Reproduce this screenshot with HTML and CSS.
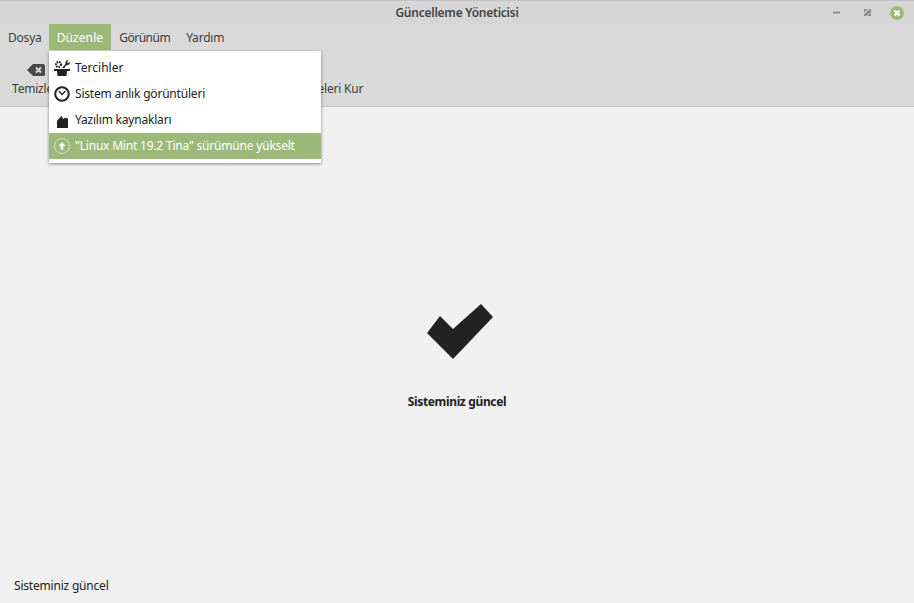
FILE: index.html
```html
<!DOCTYPE html>
<html lang="tr">
<head>
<meta charset="utf-8">
<title>Güncelleme Yöneticisi</title>
<link rel="stylesheet" href="styles.css">
</head>
<body>
<div class="window">
  <header class="titlebar">
    <div class="title">Güncelleme Yöneticisi</div>
    <div class="controls">
      <svg class="ctl" width="20" height="20" viewBox="0 0 20 20"><rect x="6" y="9.500" width="7" height="2" rx="0.500" fill="#8c8c8c"/></svg>
      <svg class="ctl" width="20" height="20" viewBox="0 0 20 20"><path d="M7 10.500 11 7H7zM14 10V7h-1.500L7 12.500V14H9zM14 10.500 10.500 14H14z" fill="#8c8c8c"/></svg>
      <svg class="ctl" width="20" height="20" viewBox="0 0 20 20"><circle cx="10" cy="11" r="7" fill="#9db97a"/><path d="M7.500 8.500l5 5M12.500 8.500l-5 5" stroke="#fff" stroke-width="2.200"/></svg>
    </div>
  </header>
  <nav class="menubar">
    <span class="mi first">Dosya</span>
    <span class="mi active">Düzenle</span>
    <span class="mi tight">Görünüm</span>
    <span class="mi">Yardım</span>
  </nav>
  <div class="toolbar">
    <div class="tool">
      <svg width="18" height="12" viewBox="0 0 18 12"><path d="M6 0h10.500a1.500 1.500 0 0 1 1.500 1.500v9a1.500 1.500 0 0 1-1.500 1.500H6L0 6z" fill="#4a4a4a"/><path d="M9 3.500l5 5M14 3.500l-5 5" stroke="#d9d9d9" stroke-width="2"/></svg>
      <span>Temizle</span>
    </div>
    <div class="tool install">
      <span>Güncellemeleri Kur</span>
    </div>
  </div>
  <main class="content">
    <div class="status-center">
      <svg class="check" width="68" height="56" viewBox="0 0 68 56"><path d="M14 12 27 25 55 0 67 13 27 55 1 29z" fill="#222"/></svg>
      <div class="uptodate">Sisteminiz güncel</div>
    </div>
    <div class="statusbar">Sisteminiz güncel</div>
  </main>
  <div class="menu">
    <div class="row">
      <svg width="18" height="18" viewBox="0 0 18 18"><circle cx="5.500" cy="5.500" r="2.500" fill="none" stroke="#222" stroke-width="2" stroke-dasharray="1.600 .8"/><path d="M9 9 12.500 5a3 3 0 0 1 3-4l-1.500 2 1 1.200 2-1.500a3.200 3.200 0 0 1-4 3.500L11.500 9z" fill="#222"/><path d="M1 10h16v2h-3l-.5 5h-9L4 12H1z" fill="#222"/></svg>
      <span class="wide">Tercihler</span>
    </div>
    <div class="row">
      <svg width="18" height="18" viewBox="0 0 18 18"><circle cx="9" cy="9" r="6.800" fill="none" stroke="#222" stroke-width="2"/><path d="M6 6 9 9.500 12.500 6" fill="none" stroke="#222" stroke-width="1.300"/></svg>
      <span>Sistem anlık görüntüleri</span>
    </div>
    <div class="row">
      <svg width="18" height="18" viewBox="0 0 18 18"><path d="M4 10 8.500 4.700 10 8 13 6.500 15 8V17H4z" fill="#222"/></svg>
      <span>Yazılım kaynakları</span>
    </div>
    <div class="row sel">
      <svg width="18" height="18" viewBox="0 0 18 18"><circle cx="9" cy="9" r="7.500" fill="none" stroke="#d6e0c6" stroke-width="1"/><path d="M9 5 12.500 9H10.200V13H7.800V9H5.500z" fill="#fff"/></svg>
      <span>"Linux Mint 19.2 Tina" sürümüne yükselt</span>
    </div>
  </div>
</div>
</body>
</html>
```
FILE: styles.css
```css
html, body { margin: 0; padding: 0; height: 100%; }
body {
  font-family: "Noto Sans", "Open Sans", sans-serif;
  font-size: 12px;
  letter-spacing: -0.2px;
  color: #3c3c3c;
  background: #f0f0f0;
  overflow: hidden;
}
.window { position: relative; display: flex; flex-direction: column; width: 914px; height: 603px; }
.titlebar {
  position: relative;
  flex: 0 0 24px;
  display: flex;
  align-items: center;
  justify-content: center;
  background: #d6d6d6;
  border-top: 1px solid #c4c4c4;
  box-sizing: border-box;
}
.title { font-weight: 600; font-size: 12px; color: #444; letter-spacing: -0.24px; }
.controls {
  position: absolute;
  right: 7px;
  top: 1px;
  display: flex;
  gap: 10px;
  align-items: center;
}
.ctl { display: block; }
.menubar { flex: 0 0 26px; display: flex; background: #d9d9d9; }
.mi { display: flex; align-items: center; padding: 0 8px; color: #3c3c3c; }
.mi.first { padding-right: 7px; }
.mi.active { background: #9db97a; color: #fff; letter-spacing: 0.1px; }
.mi.tight { letter-spacing: -0.5px; }
.toolbar {
  flex: 0 0 57px;
  box-sizing: border-box;
  display: flex;
  background: #d9d9d9;
  border-bottom: 1px solid #c2c2c2;
  padding-left: 12px;
}
.tool { display: flex; flex-direction: column; align-items: center; padding-top: 14px; }
.tool span { display: block; line-height: 16px; }
.tool svg { display: block; margin: 0 0 5px 7px; }
.install { margin-left: 206px; padding-top: 31px; }
.content { flex: 1; display: flex; flex-direction: column; min-height: 0; }
.status-center {
  flex: 1;
  display: flex;
  flex-direction: column;
  align-items: center;
  padding-top: 197px;
}
.check { display: block; margin-left: 6px; }
.uptodate { margin-top: 33px; font-weight: 700; color: #222; letter-spacing: -0.35px; }
.statusbar { padding: 0 0 9px 14px; color: #222; line-height: 16px; }
.menu {
  position: absolute;
  left: 49px;
  top: 51px;
  width: 272px;
  box-sizing: border-box;
  padding: 4px 0 4px;
  background: #fff;
  box-shadow: 0 1px 3px rgba(0,0,0,.45);
  color: #222;
}
.row { display: flex; align-items: center; gap: 4px; height: 26px; padding-left: 4px; }
.row span { margin-bottom: 2px; }
.row span.wide { letter-spacing: 0; }
.row svg { flex: none; display: block; }
.row.sel { background: #9db97a; color: #fff; }
```
